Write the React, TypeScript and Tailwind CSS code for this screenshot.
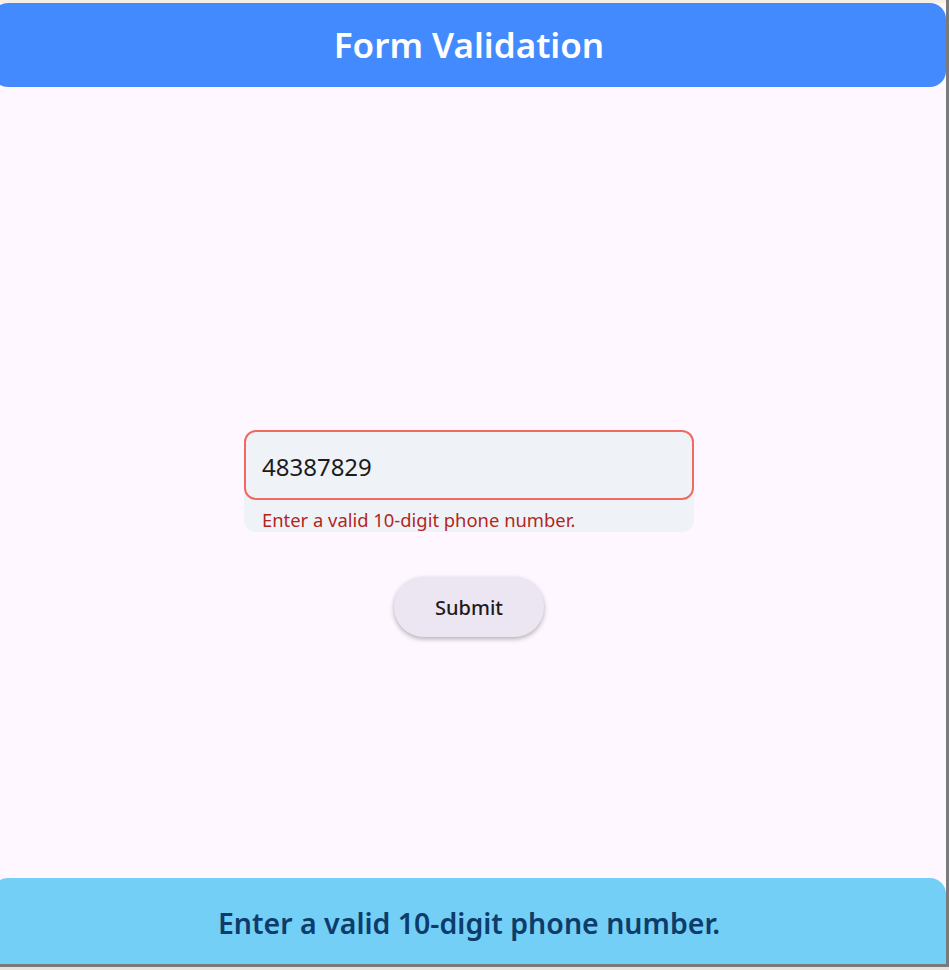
export default function App() {
	const font = { fontFamily: '"Noto Sans", "Open Sans", sans-serif' };

	return (
		<div className="flex h-[970px] w-[949px] flex-col overflow-hidden bg-[#e9e3dc]" style={font}>
			<div className="flex h-[964px] w-full shrink-0">
				<div className="flex w-[946px] flex-col overflow-hidden bg-[#f6efe6] pt-[3px]">
					<div className="-ml-2 flex h-full w-[954px] flex-col bg-[#fef7ff]">
						{/* app bar */}
						<header className="flex h-[84px] shrink-0 items-center justify-center rounded-2xl bg-[#448aff]">
							<h1 className="text-[35px] font-semibold text-white">Form Validation</h1>
						</header>

						<main className="flex flex-1 flex-col items-center pt-[343px]">
							<div className="w-[450px] rounded-xl bg-[#eff3f8]">
								<div className="flex h-[70px] items-center rounded-xl border-2 border-[#ef6b61] px-4 pt-[3px]">
									<span className="text-[24px] text-[#1d1b20]">48387829</span>
								</div>
								<p className="h-[32px] px-[18px] pt-[8px] text-[18.4px] leading-6 text-[#b3261e]">Enter a valid 10-digit phone number.</p>
							</div>

							<button className="mt-[45px] flex h-[60px] w-[150px] items-center justify-center rounded-full bg-[#ece6f3] pt-[2px] text-[20px] font-medium text-[#1d1b20] shadow-[0_2px_5px_rgba(0,0,0,0.3)]">
								Submit
							</button>
						</main>

						{/* status banner */}
						<footer className="flex h-[86px] shrink-0 items-center justify-center rounded-t-2xl bg-[#73cff5] pt-1">
							<span className="text-[28.5px] font-semibold text-[#0d3c6a]">Enter a valid 10-digit phone number.</span>
						</footer>
					</div>
				</div>
				<div className="w-[3px] bg-[#7a7a7a]" />
			</div>
			<div className="h-[3px] w-full shrink-0 bg-[#7a7a7a]" />
		</div>
	);
}
